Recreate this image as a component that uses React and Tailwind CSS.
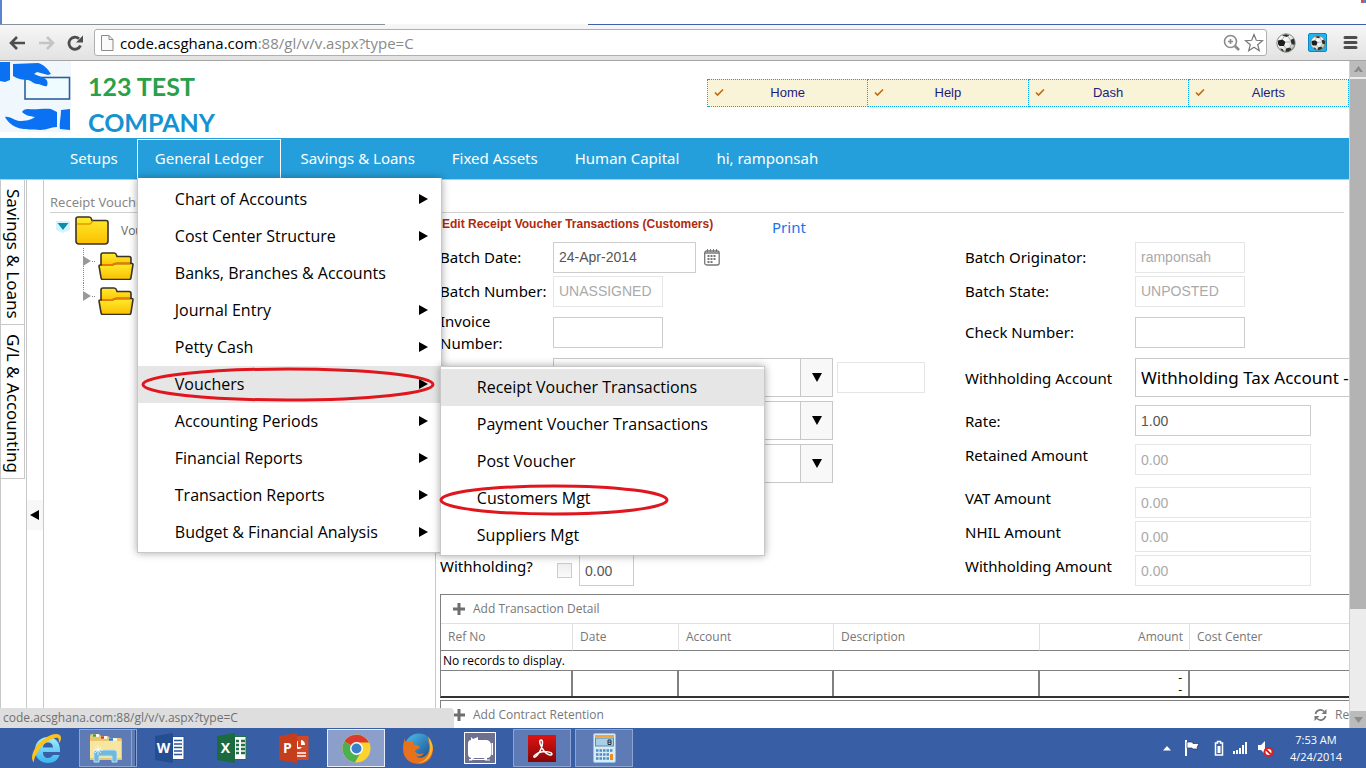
import React from "react";

const ui = "font-['Open_Sans',sans-serif]";
const wide = "font-['Noto_Sans',sans-serif]";

const menuItems = [
  { label: "Chart of Accounts", arrow: true },
  { label: "Cost Center Structure", arrow: true },
  { label: "Banks, Branches & Accounts", arrow: false },
  { label: "Journal Entry", arrow: true },
  { label: "Petty Cash", arrow: true },
  { label: "Vouchers", arrow: true, open: true },
  { label: "Accounting Periods", arrow: true },
  { label: "Financial Reports", arrow: true },
  { label: "Transaction Reports", arrow: true },
  { label: "Budget & Financial Analysis", arrow: true },
];

const voucherItems = [
  "Receipt Voucher Transactions",
  "Payment Voucher Transactions",
  "Post Voucher",
  "Customers Mgt",
  "Suppliers Mgt",
];

function TitleBar() {
  return (
    <div className="h-6 shrink-0 flex justify-between bg-white">
      <div className="w-0.5 bg-[#5b82cf]" />
      <div className="flex h-[3px]">
        <div className="w-0.5 bg-[#d05050]" />
        <div className="w-[3px] bg-[#5b82cf]" />
      </div>
    </div>
  );
}

function Ball({ size }) {
  return (
    <svg width={size} height={size} viewBox="0 0 20 20">
      <defs>
        <radialGradient id="shine" cx=".4" cy=".35" r=".7"><stop offset="0" stopColor="#fff" /><stop offset=".7" stopColor="#e2e5e0" /><stop offset="1" stopColor="#8d958c" /></radialGradient>
      </defs>
      <circle cx="10" cy="10" r="9.200" fill="url(#shine)" stroke="#6b736b" strokeWidth=".8" />
      <path d="M2 7.500l4.500-1 3 2.500-1.500 4-4.500 0-1.500-2z" fill="#1d1f1d" />
      <path d="M6 2.500l4-1.300 3.500 1.300-3 1.500zM14.500 7l3-1.500 1.300 3-.3 3.500-3-1zM10 15.500l4-1 1.500 2-3 2-3 .3zM4 15.500l2.500.5 1.500 2.500-2-.8z" fill="#2b2e2b" />
      <path d="M6.500 6.500L8 3.500M9.500 9h5M8 13l2 2.500M14.500 7L12 3.500M15.500 11l-1.500 3.500" stroke="#8a8f8a" strokeWidth=".7" fill="none" />
    </svg>
  );
}

function Toolbar() {
  return (
    <div className="shrink-0 border-b border-[#a5a5a5] bg-linear-to-b from-[#f7f7f7] to-[#e2e2e2]">
      <div className="flex h-px">
        <div className="w-[385px] bg-[#8a919c]" />
        <div className="w-[203px] bg-[#f7f7f7]" />
        <div className="flex-1 bg-[#3c62a4]" />
      </div>
      <div className="flex items-center h-[35px]">
        <button aria-label="Back" className="ml-2">
          <svg width="20" height="18" viewBox="0 0 20 18" fill="none" stroke="#4d4d4d" strokeWidth="2.600"><path d="M17 9H4M9 3L3 9l6 6" /></svg>
        </button>
        <button aria-label="Forward" className="ml-[9px]">
          <svg width="20" height="18" viewBox="0 0 20 18" fill="none" stroke="#c4c4c4" strokeWidth="2.600"><path d="M2 9h13M10 3l6 6-6 6" /></svg>
        </button>
        <button aria-label="Reload" className="ml-2">
          <svg width="20" height="18" viewBox="0 0 20 18" fill="none" stroke="#4d4d4d" strokeWidth="2.800"><path d="M15.500 11.500A6 6 0 1 1 14 4.800" /><path d="M18 1.500v7h-7z" fill="#4d4d4d" stroke="none" /></svg>
        </button>
        <div className="ml-[9px] flex flex-1 items-center h-[27px] rounded-[3px] border border-[#b0b0b0] bg-white pl-1.5 pr-0.5">
          <svg width="13" height="16" viewBox="0 0 13 16" fill="#fafafa" stroke="#8a8a8a"><path d="M.5.5h7.500l4 4v11H.5zM8 .5v4h4" /></svg>
          <label className={`${ui} ml-1.5 flex-1 text-[15px] leading-5 text-[#8a8a8a]`}>
            <span className="text-black">code.acsghana.com</span>:88/gl/v/v.aspx?type=C
          </label>
          <button aria-label="Zoom">
            <svg width="17" height="17" viewBox="0 0 17 17" fill="none" stroke="#8a8a8a" strokeWidth="1.600"><circle cx="7.500" cy="7.500" r="6" /><path d="M7.500 5v5M5 7.500h5" /><path d="M12 12l4 4" strokeWidth="2.600" /></svg>
          </button>
          <button aria-label="Bookmark" className="ml-1">
            <svg width="20" height="19" viewBox="0 0 20 19" fill="none" stroke="#777" strokeWidth="1.200"><path d="M10 1.500l2.300 5.800 6.200.4-4.800 4 1.600 6L10 14.300l-5.300 3.400 1.600-6-4.800-4 6.200-.4z" /></svg>
          </button>
        </div>
        <button aria-label="Football" className="ml-[9px]"><Ball size={20} /></button>
        <button aria-label="Football scores" className="ml-3 flex size-[19px] items-center justify-center rounded-[2px] border border-[#0b86c4] bg-[#1fb4f2]"><Ball size={16} /></button>
        <button aria-label="Menu" className="ml-4 mr-2">
          <svg width="15" height="15" viewBox="0 0 15 15" stroke="#4d4d4d" strokeWidth="3" strokeLinecap="round"><path d="M2 2.500h11M2 7.500h11M2 12.500h11" /></svg>
        </button>
      </div>
    </div>
  );
}

function Header() {
  return (
    <header className="flex h-[77px] items-start bg-white">
      <svg className="shrink-0" width="72" height="72" viewBox="0 0 72 72">
        <rect width="71" height="71" fill="#f1f8fd" />
        <rect x="25" y="16.500" width="44.500" height="21.500" fill="#effcff" stroke="#2d5f9e" strokeWidth="1.600" />
        <path d="M0 1h10v18l-5 2-5-1z" fill="#0a72f2" />
        <path d="M13 3c8 0 17-1 25-1 5 1 10 6 13 11l-3 1-11-3-3 2 10 4c4 2 4 5 3 8-4 1-6-2-10-2-3 0-5-3-9-4-5 0-10-1-15-4z" fill="#0a72f2" />
        <path d="M5 56c4-1 9 3 14 4 7 0 12-1 16-4-5-1-9-1-13-5 1-2 3-3 6-3 8 1 16-1 23 0l6 3v15c-7 0-9 3-17 3-14-1-27 1-35-13z" fill="#0a72f2" />
        <path d="M61 49l9-1v21l-10-1c-1-5 1-12 1-19z" fill="#0a72f2" />
      </svg>
      <div className="ml-4 pt-[7px] font-[Lato,sans-serif] text-[25px] font-bold leading-9">
        <div className="text-[#2aa04a]">123 TEST</div>
        <div className="text-[#1592d2]">COMPANY</div>
      </div>
      <div className="ml-auto mt-[18px] grid w-[642px] grid-cols-4 border-l border-dotted border-[#00a8f0] font-['Liberation_Sans',sans-serif] text-[13px] text-[#1c1c80]">
        {["Home", "Help", "Dash", "Alerts"].map((t) => (
          <a key={t} href="#" className="flex h-7 items-center border-y border-r border-dotted border-[#00a8f0] bg-[#f9f3d8] pl-1.5 pr-4">
            <svg width="10" height="10" viewBox="0 0 10 10" fill="none" stroke="#c06a0a" strokeWidth="1.600"><path d="M1 4.500L3.500 7 9 1.500" /></svg>
            <span className="flex-1 text-center">{t}</span>
          </a>
        ))}
      </div>
    </header>
  );
}

function Ring({ className, width, height }) {
  return (
    <svg className={className} width={width} height={height} fill="none">
      <ellipse cx={width / 2} cy={height / 2} rx={width / 2 - 2} ry={height / 2 - 2} stroke="#e0161e" strokeWidth="3" />
    </svg>
  );
}

function Menu() {
  return (
    <ul className={`${ui} absolute -left-px top-[38px] z-10 w-[305px] border border-t-0 border-[#c8c8c8] bg-white pb-px pt-[3px] text-base text-black shadow-[0_0_8px_rgba(0,0,0,0.35)]`}>
      {menuItems.map((m) => (
        <li key={m.label} className={m.open ? "relative bg-[#e6e6e6]" : "relative"}>
          <a href="#" className="flex h-[37px] items-center justify-between pl-[37px] pr-[13px]">
            {m.label}
            {m.arrow && <svg width="9" height="10" viewBox="0 0 9 10"><path d="M0 0l9 5-9 5z" /></svg>}
          </a>
          {m.open && (
            <>
              <Ring className="absolute left-[3px] top-px z-10" width={294} height={35} />
              <ul className="absolute left-[302px] top-0 w-[325px] border border-[#c8c8c8] bg-white pb-px pt-0.5 shadow-[0_0_8px_rgba(0,0,0,0.35)]">
                {voucherItems.map((v, i) => (
                  <li key={v} className={i === 0 ? "relative bg-[#e6e6e6]" : "relative"}>
                    <a href="#" className="flex h-[37px] items-center pl-9">{v}</a>
                    {v === "Customers Mgt" && <Ring className="absolute -left-0.5 top-1" width={230} height={32} />}
                  </li>
                ))}
              </ul>
            </>
          )}
        </li>
      ))}
    </ul>
  );
}

function Nav() {
  return (
    <nav className={`${wide} flex h-[41px] items-center gap-px bg-[#259fdb] pl-[52px] text-[15px] text-white`}>
      {["Setups", "General Ledger", "Savings & Loans", "Fixed Assets", "Human Capital", "hi, ramponsah"].map((t) => (
        <div key={t} className={t === "General Ledger" ? "relative border border-white" : "border border-transparent"}>
          <a href="#" className="flex h-[38px] items-center px-[17px]">{t}</a>
          {t === "General Ledger" && <Menu />}
        </div>
      ))}
    </nav>
  );
}

function ClosedFolder() {
  return (
    <svg width="34" height="29" viewBox="0 0 34 29">
      <defs><linearGradient id="fold" x1="0" y1="0" x2="0" y2="1"><stop offset="0" stopColor="#ffec2e" /><stop offset="1" stopColor="#fbbf00" /></linearGradient></defs>
      <path d="M1 3q0-2 2-2h11q2 0 2.500 2l.5 1.500h14q2 0 2 2V25q0 3-3 3H4q-3 0-3-3z" fill="url(#fold)" stroke="#3a3326" strokeWidth="1.600" />
      <path d="M2 8h13l3-3" fill="none" stroke="#e89b00" strokeWidth="1.400" />
    </svg>
  );
}

function OpenFolder() {
  return (
    <svg width="36" height="28" viewBox="0 0 36 28">
      <path d="M3 15V3q0-2 2-2h11q2 0 2.500 2l.5 1.500h12q2 0 2 2V15z" fill="url(#fold)" stroke="#3a3326" strokeWidth="1.600" />
      <path d="M1 14q0-1 1-1h12l4-1.500h16q1 0 1 1l-2 13q0 2-2 2H5q-2 0-2-2z" fill="url(#fold)" stroke="#3a3326" strokeWidth="1.600" />
      <path d="M4 13h10l4-1.500h14" fill="none" stroke="#e87a00" strokeWidth="1.800" />
    </svg>
  );
}

function Tree() {
  return (
    <aside className="w-[392px] shrink-0 border-r border-[#c8c8c8] pl-3">
      <div className="flex h-[35px] items-center">
        <svg className="mb-2" width="14" height="12" viewBox="0 0 14 12"><path d="M0 0h14v9l-7 3-7-3z" fill="#d4f4fb" /><path d="M1.500 2h11L7 9z" fill="#0d8bab" /></svg>
        <span className="ml-[5px]"><ClosedFolder /></span>
        <span className={`${ui} ml-3 text-xs text-[#666]`}>Vouchers</span>
      </div>
      <ul className="ml-[27px]">
        {[0, 1].map((i) => (
          <li key={i} className="flex h-[35px] items-center">
            <svg className="self-start" width="15" height={i ? 20 : 35}><path d={i ? "M.5 0v8" : "M.5 0v35"} stroke="#888" strokeDasharray="1 1" /><path d="M0 8l8 5-8 5z" fill="#999" /><path d="M9 13.500h4" stroke="#888" strokeDasharray="1 1" /></svg>
            <OpenFolder />
          </li>
        ))}
      </ul>
    </aside>
  );
}

const box = "h-[31px] border px-[5px] font-['Liberation_Sans',sans-serif] text-sm";
const live = "border-[#cdcdcd] text-[#555]";
const off = "border-[#e6e6e6] bg-white text-[#aaa]";

function Combo({ label }) {
  return (
    <div className="flex h-[39px] w-[280px] border border-[#c8c8c8]">
      <input aria-label={label} className="w-full min-w-0 px-1.5" />
      <button type="button" aria-label={`Open ${label}`} className="flex w-8 shrink-0 items-center justify-center border-l border-[#c8c8c8] bg-[#f8f8f8]">
        <svg width="10" height="9" viewBox="0 0 10 9"><path d="M0 0h10L5 9z" /></svg>
      </button>
    </div>
  );
}

function Amount({ id, label }) {
  return (
    <>
      <label htmlFor={id} className="col-start-3 self-start leading-[26px]">{label}</label>
      <input id={id} disabled defaultValue="0.00" className={`${box} ${off} mt-0.5 w-44 self-start`} />
    </>
  );
}

function Form() {
  return (
    <form className={`${wide} grid grid-cols-[113px_412px_170px_auto] grid-rows-[34px_34px_48px_43px_43px_43px_34px_34px_34px] items-center text-[15px] leading-[22px] text-black`}>
      <label htmlFor="date">Batch Date:</label>
      <div className="flex items-center">
        <input id="date" defaultValue="24-Apr-2014" className={`${box} ${live} w-[143px]`} />
        <button type="button" aria-label="Open calendar" className="ml-2">
          <svg width="16" height="17" viewBox="0 0 16 17" fill="none" stroke="#777"><rect x=".7" y="2" width="14.500" height="14" rx="2" strokeWidth="1.300" /><path d="M1 4h14" strokeWidth="1.500" /><path d="M3.500 0v3M6.500 0v3M9.500 0v3M12.500 0v3" /><path d="M3.500 7h9M3.500 10h9M3.500 13h6" strokeWidth="1.800" strokeDasharray="2 1" /></svg>
        </button>
      </div>
      <label htmlFor="orig">Batch Originator:</label>
      <input id="orig" disabled defaultValue="ramponsah" className={`${box} ${off} w-[110px]`} />

      <label htmlFor="num" className="whitespace-nowrap">Batch Number:</label>
      <input id="num" disabled defaultValue="UNASSIGNED" className={`${box} ${off} w-[110px]`} />
      <label htmlFor="state">Batch State:</label>
      <input id="state" disabled defaultValue="UNPOSTED" className={`${box} ${off} w-[110px]`} />

      <label htmlFor="inv" className="w-20">Invoice Number:</label>
      <input id="inv" className={`${box} ${live} w-[110px]`} />
      <label htmlFor="check">Check Number:</label>
      <input id="check" className={`${box} ${live} w-[110px]`} />

      <div className="col-start-2 flex items-center gap-1">
        <Combo label="Customer" />
        <input aria-label="Customer code" disabled className={`${box} ${off} w-[88px]`} />
      </div>
      <label htmlFor="wacc">Withholding Account</label>
      <input id="wacc" defaultValue="Withholding Tax Account - Payable" className="h-[39px] w-[280px] border border-[#c8c8c8] px-[5px] text-[17px]" />

      <div className="col-start-2"><Combo label="Currency" /></div>
      <label htmlFor="rate">Rate:</label>
      <input id="rate" defaultValue="1.00" className={`${box} ${live} w-44`} />

      <div className="col-start-2"><Combo label="Account" /></div>
      <Amount id="ret" label="Retained Amount" />
      <Amount id="vat" label="VAT Amount" />
      <Amount id="nhil" label="NHIL Amount" />

      <label htmlFor="wh" className="self-start leading-[26px]">Withholding?</label>
      <div className="flex items-center self-start pl-1 pt-0.5">
        <input id="wh" type="checkbox" className="size-[15px] appearance-none border border-[#ccc] bg-linear-to-b from-[#eee] to-[#fafafa]" />
        <input aria-label="Withholding rate" defaultValue="0.00" className={`${box} ${live} ml-[7px] w-[55px]`} />
      </div>
      <Amount id="wam" label="Withholding Amount" />
    </form>
  );
}

function AddRow({ children, refresh }) {
  return (
    <div className="flex h-7 items-center px-3">
      <svg width="12" height="12" viewBox="0 0 12 12" stroke="#6e6e6e" strokeWidth="3"><path d="M6 0v12M0 6h12" /></svg>
      <button className="ml-2">{children}</button>
      {refresh && (
        <button className="-mr-1.5 ml-auto flex items-center gap-2">
          <svg width="13" height="12" viewBox="0 0 13 12" fill="none" stroke="#777" strokeWidth="1.700"><path d="M1.500 5A5 5 0 0 1 10 2.500M11.500 7A5 5 0 0 1 3 9.500" /><path d="M12.500 0v5h-5zM.5 12V7h5z" fill="#777" stroke="none" /></svg>
          Refresh
        </button>
      )}
    </div>
  );
}

function Records() {
  const foot = "border-r-2 border-[#808080]";
  const head = "border-r border-[#e0e0e0] pl-[7px] text-left font-normal";
  return (
    <section className={`${ui} -mr-9 mt-[7px] text-xs text-[#777]`}>
      <div className="border border-[#808080] border-b-2 border-b-[#333]">
        <AddRow>Add Transaction Detail</AddRow>
        <table className="w-full table-fixed border-separate border-spacing-0">
          <colgroup>
            <col className="w-[132px]" /><col className="w-[106px]" /><col className="w-[155px]" /><col className="w-[206px]" /><col className="w-[150px]" /><col />
          </colgroup>
          <thead>
            <tr className="h-7 *:border-t *:border-b *:border-t-[#e0e0e0] *:border-b-[#808080]">
              <th className={head}>Ref No</th>
              <th className={head}>Date</th>
              <th className={head}>Account</th>
              <th className={head}>Description</th>
              <th className="border-r border-[#e0e0e0] pr-1.5 text-right font-normal">Amount</th>
              <th className="pl-[7px] text-left font-normal">Cost Center</th>
            </tr>
          </thead>
          <tbody>
            <tr className="h-5"><td colSpan={6} className="border-b border-[#808080] pl-0.5 text-black">No records to display.</td></tr>
          </tbody>
          <tfoot>
            <tr className="h-[25px] text-black">
              <td className={foot} /><td className={foot} /><td className={foot} /><td className={foot} />
              <td className={`${foot} pr-1.5 text-right leading-3`}>-<br />-</td>
              <td />
            </tr>
          </tfoot>
        </table>
      </div>
      <div className="mt-0.5 border border-[#808080]">
        <AddRow refresh>Add Contract Retention</AddRow>
      </div>
    </section>
  );
}

function Scrollbar() {
  return (
    <div className="flex w-[17px] shrink-0 flex-col border-l border-[#d0d0d0] bg-[#ececec]">
      <div className="flex h-4 items-center justify-center bg-[#bbb]"><svg width="9" height="6" viewBox="0 0 9 6"><path d="M0 6l4.500-6L9 6H6L4.500 4 3 6z" fill="#888" /></svg></div>
      <div className="mt-0.5 h-[530px] bg-[#b3b3b3]" />
      <div className="mt-auto flex h-[17px] items-center justify-center bg-[#bbb]"><svg width="9" height="6" viewBox="0 0 9 6"><path d="M0 0h9L4.500 6z" fill="#8c8c8c" /></svg></div>
    </div>
  );
}

function OfficeIcon({ letter, color, dark, kind }) {
  return (
    <svg width="30" height="30" viewBox="0 0 30 30">
      <rect x="16" y="3.500" width="13" height="23" fill={kind === "p" ? color : "#fff"} stroke={color} />
      {kind === "w" && <path d="M19 7.500h8M19 11h8M19 14.500h8M19 18h8M19 21.500h8" stroke={color} strokeWidth="1.300" />}
      {kind === "x" && <path d="M19 8h3M24 8h4M19 12h3M24 12h4M19 16h3M24 16h4M19 20h3M24 20h4" stroke={color} strokeWidth="2.600" />}
      {kind === "p" && <><path d="M19 8a4 4 0 1 0 4 6h-4z" fill="#fff" /><path d="M22 7v5h4a5 5 0 0 0-4-5" fill="#fff" /><path d="M18 20h9M18 23h9" stroke="#fff" strokeWidth="1.500" /></>}
      <path d="M0 3l18-3v30L0 27z" fill={dark} />
      <text x="8.500" y="20" fontSize="14" fontWeight="700" fontFamily="Open Sans, sans-serif" fill="#fff" textAnchor="middle">{letter}</text>
    </svg>
  );
}

function IeIcon() {
  return (
    <svg width="31" height="31" viewBox="0 0 31 31">
      <defs><linearGradient id="ie" x1="0" y1="0" x2="0" y2="1"><stop offset="0" stopColor="#a5ecff" /><stop offset="1" stopColor="#38b4ee" /></linearGradient></defs>
      <path d="M29 19H12c0 4 2 6 5 6 2 0 4-1 5-3h6.500C27 27 23 30 17 30 9 30 4 24.500 4 17S9.500 4 17 4s12 5.500 12 13zM12 14.500h10c0-3-2-5-5-5s-5 2-5 5z" fill="url(#ie)" />
      <path d="M3 29.500C-2 25 3 13 13 6 21 0 30-1 30 5c0 2-1 4-2 5 0-4 0-6-4-5-5 1-12 6-16 12-4 6-5.500 10-5 12.500z" fill="#fcc419" />
    </svg>
  );
}

function ExplorerIcon() {
  return (
    <svg width="34" height="30" viewBox="0 0 34 30">
      <path d="M1 3q0-2 2-2h7l2 2h7l2 2h10q2 0 2 2v20H1z" fill="#e9c66c" />
      <path d="M1 8h31v17H1z" fill="#f8e5a0" />
      <path d="M4 2.500h6M12 4.500h6M20 6.500h8" stroke="#fff" strokeWidth="2.500" />
      <path d="M4 2.500h3" stroke="#25a74a" strokeWidth="2.500" /><path d="M12 4.500h3" stroke="#cf3b2b" strokeWidth="2.500" /><path d="M20 6.500h4" stroke="#2380d8" strokeWidth="2.500" />
      <path d="M5 29v-9q0-3 3-3h17q3 0 3 3v9h-5v-6H10v6z" fill="#6fb9dc" stroke="#b9e3f5" />
      <path d="M9 12v10M4 17h10M6 14l6 6M12 14l-6 6" stroke="#fff" strokeWidth=".7" />
    </svg>
  );
}

function ChromeIcon() {
  return (
    <svg width="29" height="29" viewBox="0 0 29 29">
      <circle cx="14.500" cy="14.500" r="14" fill="#fdd32e" />
      <path d="M14.500 14.500L2.400 7.500A14 14 0 0 1 27 8.500H15z" fill="#dc3a2e" />
      <path d="M14.500 14.500L2.400 7.500a14 14 0 0 0 10.500 20.900l6-10.500z" fill="#4caf50" />
      <circle cx="14.500" cy="14.500" r="6.500" fill="#fff" /><circle cx="14.500" cy="14.500" r="5" fill="#3b7fc9" />
    </svg>
  );
}

function FirefoxIcon() {
  return (
    <svg width="31" height="31" viewBox="0 0 31 31">
      <defs><linearGradient id="globe" x1="0" y1="0" x2="1" y2="1"><stop offset="0" stopColor="#4fc3ee" /><stop offset="1" stopColor="#123c86" /></linearGradient></defs>
      <circle cx="16" cy="15" r="14.500" fill="url(#globe)" />
      <path d="M2 5c0 2 0 3 1 4 2-1 5-1 7-1 0 3 1 4 3 4 2 1 4 1 4 2-1 2-4 2-5 4 1 3 5 4 9 2-2 4-7 4-9 3 5 4 13 1 14-6 1-4 0-8-2-11 4 3 7 8 6 12-1 8-7 13-14 13C7 31 0 25 0 16 0 11 1 8 2 5z" fill="#e8711c" />
      <path d="M25 4c4 4 6 10 4 15-2 7-8 11-14 11 8-2 12-8 12-15 0-4-1-8-2-11z" fill="#fbb829" />
    </svg>
  );
}

function CameraIcon() {
  return (
    <svg width="32" height="32" viewBox="0 0 32 32">
      <rect x=".5" y=".5" width="31" height="31" fill="#6d7090" stroke="#fff" />
      <path d="M7 5l2 2 5-2v3h9q4 1 4 5v9q0 4-4 4H8q-4 0-4-4V12q0-4 3-4zM27.500 11h1.500v12h-1.500zM7 26h3l-2 2.500H5V27h2zM20 26h3v1.500h3v1h-5zM9 27h12v1H9z" fill="#fff" />
    </svg>
  );
}

function AcrobatIcon() {
  return (
    <svg width="28" height="27" viewBox="0 0 28 27">
      <defs><linearGradient id="acro" x1="0" y1="0" x2="0" y2="1"><stop offset="0" stopColor="#e01212" /><stop offset="1" stopColor="#850606" /></linearGradient></defs>
      <rect width="28" height="27" fill="url(#acro)" />
      <path d="M13 5c-3 0 0 7 3 11s8 5 8 3-7-3-11-2-8 4-7 5 5-3 7-8 2-9 0-9z" fill="none" stroke="#fff" strokeWidth="1.500" />
    </svg>
  );
}

function CalculatorIcon() {
  return (
    <svg width="23" height="30" viewBox="0 0 23 30">
      <rect x=".5" y=".5" width="22" height="29" rx="1.500" fill="#d7ebf8" stroke="#8fbfe0" />
      <path d="M2 3h19" stroke="#f2a33a" strokeWidth="2" />
      <rect x="2.500" y="5" width="18" height="8" fill="#a9cfe6" stroke="#5e8cab" />
      <path d="M15 7h3v4.500h-3zM15 9.200h3" fill="none" stroke="#234" />
      <path d="M3 17.500h17M3 21.500h13M3 25.500h13" stroke="#4c8fc0" strokeWidth="2.500" strokeDasharray="2.500 1" />
      <path d="M18.500 21v6" stroke="#ee8f1d" strokeWidth="3" />
    </svg>
  );
}

const apps = [
  { name: "Internet Explorer", icon: <IeIcon /> },
  { name: "File Explorer", icon: <ExplorerIcon />, open: true },
  { name: "Word", icon: <OfficeIcon letter="W" kind="w" color="#2b579a" dark="#244e8f" /> },
  { name: "Excel", icon: <OfficeIcon letter="X" kind="x" color="#217346" dark="#1c6b40" /> },
  { name: "PowerPoint", icon: <OfficeIcon letter="P" kind="p" color="#d24726" dark="#c63d1c" /> },
  { name: "Chrome", icon: <ChromeIcon />, active: true },
  { name: "Firefox", icon: <FirefoxIcon /> },
  { name: "Recorder", icon: <CameraIcon /> },
  { name: "Acrobat", icon: <AcrobatIcon />, open: true },
  { name: "Calculator", icon: <CalculatorIcon />, open: true },
];

function appFrame(a) {
  if (a.active) return "border-[#e6ecf8] bg-[#8c9fcb]";
  if (a.open) return "border-[#8ea4d0] bg-[#5f7bb6]";
  return "border-transparent";
}

function Taskbar() {
  return (
    <footer className="flex h-10 shrink-0 items-center bg-[#385fa6] pl-[17px]">
      <div className="flex gap-1">
        {apps.map((a) => (
          <button key={a.name} aria-label={a.name} className={`flex h-[38px] w-[58px] items-center justify-center border ${appFrame(a)}`}>
            {a.name === "File Explorer" ? (
              <span className="flex h-full w-full items-center border-r border-[#2b4a85]">
                <span className="flex h-full flex-1 items-center justify-center border-r border-[#8ea4d0]">{a.icon}</span>
                <span className="w-[3px]" />
              </span>
            ) : a.icon}
          </button>
        ))}
      </div>
      <div className="ml-auto flex items-center">
        <svg width="8" height="5" viewBox="0 0 8 5"><path d="M0 4.500L4 0l4 4.500z" fill="#fff" /></svg>
        <svg className="ml-[13px]" width="17" height="16" viewBox="0 0 17 16"><path d="M2 0v16" stroke="#fff" strokeWidth="2" /><path d="M3 2h5l1 1.500h6l-2 4 1 1.500H9L8 8H3z" fill="#fff" stroke="#1f3566" strokeWidth=".7" /></svg>
        <svg className="ml-[13px]" width="10" height="16" viewBox="0 0 10 16" fill="none"><path d="M3.500 1.500h3v1.500h2v12h-7V3h2z" stroke="#fff" strokeWidth="1.500" /><path d="M3.500 6h3v7h-3z" fill="#fff" /></svg>
        <svg className="ml-2" width="17" height="14" viewBox="0 0 17 14" stroke="#fff" strokeWidth="2"><path d="M2 13v-3M5 13V9M8 13V7M11 13V4M14 13V1" /></svg>
        <svg className="ml-2" width="17" height="17" viewBox="0 0 17 17"><path d="M1 5h3l4-4v13l-4-4H1z" fill="#fff" /><circle cx="11.500" cy="12" r="4" fill="#fff" stroke="#d92020" strokeWidth="2" /><path d="M9 9.500l5 5" stroke="#d92020" strokeWidth="1.800" /></svg>
        <div className={`${ui} ml-4 mr-6 text-center text-[11px] leading-[17px] text-white`}>
          <div>7:53 AM</div>
          <div>4/24/2014</div>
        </div>
      </div>
    </footer>
  );
}

export default function App() {
  return (
    <div className="flex h-screen flex-col overflow-hidden bg-white">
      <TitleBar />
      <Toolbar />
      <div className="relative flex min-h-0 flex-1">
        <div className="flex min-w-0 flex-1 flex-col overflow-hidden">
          <Header />
          <Nav />
          <main className="flex min-h-0 flex-1 overflow-hidden border-t border-[#c8c8c8]">
            <div className={`${wide} w-[26px] shrink-0 border-l border-[#c8c8c8] text-[17px] leading-6 text-black`}>
              {["Savings & Loans", "G/L & Accounting"].map((t) => (
                <button key={t} className="flex w-6 items-center whitespace-nowrap border-b border-r border-[#c8c8c8] pb-[5px] pt-[9px] [writing-mode:vertical-rl]">{t}</button>
              ))}
            </div>
            <div className="w-[18px] shrink-0 border-x border-[#c8c8c8]">
              <button aria-label="Collapse panel" className="mt-80 flex h-[30px] w-full items-center bg-[#f8f8f8] pl-[3px]">
                <svg width="9" height="10" viewBox="0 0 9 10"><path d="M9 0v10L0 5z" /></svg>
              </button>
            </div>
            <div className="flex min-w-0 flex-1 flex-col">
              <h1 className={`${wide} ml-1.5 mr-[5px] flex h-[33px] items-end border-b border-[#d0d0d0] text-[13px] leading-5 text-[#888]`}>Receipt Voucher Transactions</h1>
              <div className="flex min-h-0 flex-1">
                <Tree />
                <div className="min-w-0 flex-1 overflow-hidden pl-1">
                  <div className="flex h-[27px] items-start pl-0.5">
                    <h2 className="w-[330px] pt-px font-['Liberation_Sans',sans-serif] text-xs font-bold leading-5 text-[#b02a0c]">Edit Receipt Voucher Transactions (Customers)</h2>
                    <a href="#" className={`${wide} pt-[3px] text-[15px] leading-[22px] text-[#1a73e8]`}>Print</a>
                  </div>
                  <Form />
                  <Records />
                </div>
              </div>
            </div>
          </main>
        </div>
        <Scrollbar />
        <div className={`${ui} absolute bottom-0 left-0 h-5 w-[454px] rounded-tr bg-[#dedede] pl-[3px] text-xs leading-5 text-[#707070]`}>code.acsghana.com:88/gl/v/v.aspx?type=C</div>
      </div>
      <Taskbar />
    </div>
  );
}
